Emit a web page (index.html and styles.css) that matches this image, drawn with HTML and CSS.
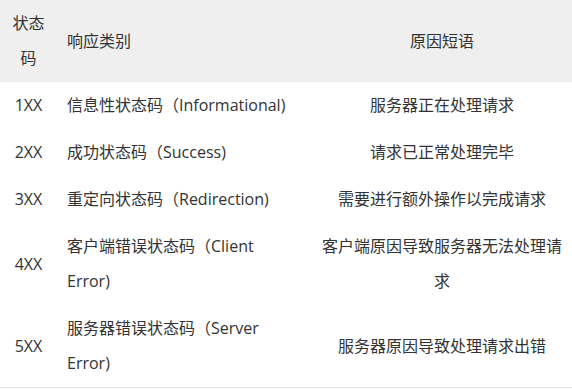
FILE: index.html
```html
<!DOCTYPE html>
<html lang="zh">
<head>
<meta charset="utf-8">
<link rel="stylesheet" href="styles.css">
</head>
<body>
<table class="codes">
  <colgroup>
    <col class="c1">
    <col class="c2">
    <col class="c3">
  </colgroup>
  <thead>
    <tr>
      <th class="code">状态码</th>
      <th class="type">响应类别</th>
      <th class="reason">原因短语</th>
    </tr>
  </thead>
  <tbody>
    <tr>
      <td class="code">1XX</td>
      <td class="type">信息性状态码（Informational)</td>
      <td class="reason">服务器正在处理请求</td>
    </tr>
    <tr>
      <td class="code">2XX</td>
      <td class="type">成功状态码（Success)</td>
      <td class="reason">请求已正常处理完毕</td>
    </tr>
    <tr>
      <td class="code">3XX</td>
      <td class="type">重定向状态码（Redirection)</td>
      <td class="reason">需要进行额外操作以完成请求</td>
    </tr>
    <tr>
      <td class="code">4XX</td>
      <td class="type">客户端错误状态码（Client Error)</td>
      <td class="reason">客户端原因导致服务器无法处理请求</td>
    </tr>
    <tr>
      <td class="code">5XX</td>
      <td class="type">服务器错误状态码（Server Error)</td>
      <td class="reason">服务器原因导致处理请求出错</td>
    </tr>
  </tbody>
</table>
</body>
</html>
```

FILE: styles.css
```css
html, body {
  margin: 0;
  padding: 0;
  background: #ffffff;
}

.codes {
  width: 572px;
  table-layout: fixed;
  border-collapse: collapse;
  font-family: "Open Sans", "Noto Sans CJK SC", sans-serif;
  font-size: 16px;
  line-height: 35px;
  color: #333333;
  border-bottom: 1px solid #e3e3e3;
}

.c1 { width: 57px; }
.c2 { width: 255px; }
.c3 { width: 260px; }

.codes th,
.codes td {
  padding: 6px 10px;
  vertical-align: middle;
  font-weight: normal;
}

.codes thead tr {
  background: #efefef;
}

.code {
  text-align: center;
}

.codes .type {
  text-align: left;
  padding-right: 18px;
}

.reason {
  text-align: center;
}
```
